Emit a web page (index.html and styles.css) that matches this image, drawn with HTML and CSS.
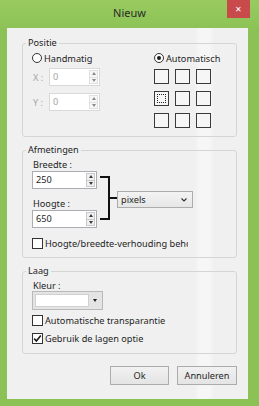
FILE: index.html
```html
<!DOCTYPE html>
<html lang="nl">
<head>
        <meta charset="UTF-8" />
        <meta name="viewport" content="width=device-width, initial-scale=1" />
        <title>Nieuw</title>
        <link rel="stylesheet" href="styles.css">
</head>
<body>

<div class="window">
        <div class="titlebar">
                <span class="title">Nieuw</span>
                <button class="close">&#x2715;</button>
        </div>

        <div class="client">
                <fieldset class="group group-pos">
                        <legend>Positie</legend>
                        <div class="pos-cols">
                                <div class="pos-manual">
                                        <label class="opt"><span class="radio"></span>Handmatig</label>
                                        <div class="coord">
                                                <span class="coord-label">X :</span>
                                                <div class="spin spin-small disabled">
                                                        <span class="spin-value">0</span>
                                                        <span class="spin-btns"><i class="up"></i><i class="down"></i></span>
                                                </div>
                                        </div>
                                        <div class="coord">
                                                <span class="coord-label">Y :</span>
                                                <div class="spin spin-small disabled">
                                                        <span class="spin-value">0</span>
                                                        <span class="spin-btns"><i class="up"></i><i class="down"></i></span>
                                                </div>
                                        </div>
                                </div>
                                <div class="pos-auto">
                                        <label class="opt"><span class="radio checked"></span>Automatisch</label>
                                        <div class="anchor-grid">
                                                <span></span><span></span><span></span>
                                                <span class="focus"></span><span></span><span></span>
                                                <span></span><span></span><span></span>
                                        </div>
                                </div>
                        </div>
                </fieldset>

                <fieldset class="group group-dims">
                        <legend>Afmetingen</legend>
                        <div class="dims-row">
                                <div class="dims-col">
                                        <div class="field-label">Breedte :</div>
                                        <div class="spin">
                                                <span class="spin-value">250</span>
                                                <span class="spin-btns"><i class="up"></i><i class="down"></i></span>
                                        </div>
                                        <div class="field-label second">Hoogte :</div>
                                        <div class="spin">
                                                <span class="spin-value">650</span>
                                                <span class="spin-btns"><i class="up"></i><i class="down"></i></span>
                                        </div>
                                </div>
                                <div class="brace">
                                        <span class="brace-arm"></span>
                                        <span class="brace-tick"></span>
                                </div>
                                <div class="unit-select">
                                        <span>pixels</span>
                                        <svg width="6" height="4" viewBox="0 0 6 4"><path d="M0.5 0.5 L3 3 L5.5 0.5" fill="none" stroke="#333" stroke-width="1.1"/></svg>
                                </div>
                        </div>
                        <label class="check check-ratio">
                                <span class="box"></span>
                                <span class="check-text clip">Hoogte/breedte-verhouding behouden</span>
                        </label>
                </fieldset>

                <fieldset class="group group-layer">
                        <legend>Laag</legend>
                        <div class="field-label small">Kleur :</div>
                        <div class="color-combo">
                                <span class="color-swatch"></span>
                                <span class="combo-btn"><i></i></span>
                        </div>
                        <label class="check check-first">
                                <span class="box"></span>
                                <span class="check-text">Automatische transparantie</span>
                        </label>
                        <label class="check check-second">
                                <span class="box checked">
                                        <svg width="9" height="9" viewBox="0 0 9 9"><path d="M1.2 4.6 L3.4 7 L7.8 1.4" fill="none" stroke="#1a1a1a" stroke-width="1.6"/></svg>
                                </span>
                                <span class="check-text">Gebruik de lagen optie</span>
                        </label>
                </fieldset>

                <div class="actions">
                        <button class="btn">Ok</button>
                        <button class="btn btn-wide">Annuleren</button>
                </div>
        </div>
</div>

</body>
</html>
```

FILE: styles.css
```css
* {
        box-sizing: border-box;
}

body {
        margin: 0;
        font-family: "Noto Sans", "Open Sans", sans-serif;
        font-size: 9.2px;
        color: #1e1e1e;
        background: #8cc255;
}

.window {
        width: 259px;
        height: 406px;
        background: #8cc255;
        display: flex;
        flex-direction: column;
}

.titlebar {
        height: 28px;
        display: flex;
        align-items: flex-start;
        padding-left: 32px;
        background: linear-gradient(#98ca60, #8dc356);
}

.title {
        flex: 1;
        text-align: center;
        font-size: 11px;
        line-height: 26px;
        color: #2a2a2a;
}

.close {
        width: 23px;
        height: 18px;
        margin-right: 9px;
        padding: 0;
        border: 0;
        background: #c94a4b;
        color: #fff;
        font-family: inherit;
        font-size: 8px;
        line-height: 18px;
}

.client {
        margin: 0 11px 0 7px;
        height: 371px;
        padding: 9px 11px 0 15px;
        background: linear-gradient(to right, #f0f0f0 0, #f0f0f0 188px, #f6f6f6 192px, #f6f6f6 203px, #f0f0f0 207px);
}

/* group boxes */

.group {
        margin: 0;
        padding: 3px 0 8px 9px;
        border: 1px solid #d5d5d5;
        border-radius: 3px;
        min-width: 0;
}

.group + .group {
        margin-top: 7px;
}

.group legend {
        padding: 0 2px;
        margin-left: -6px;
        line-height: 12px;
}

.group-layer {
        padding-bottom: 9px;
}

/* positie */

.pos-cols {
        display: flex;
}

.pos-manual {
        width: 122px;
}

.opt {
        display: flex;
        align-items: center;
        gap: 2px;
        height: 12px;
}

.radio {
        width: 10px;
        height: 10px;
        border: 1px solid #333;
        border-radius: 50%;
        background: #fff;
        display: flex;
        align-items: center;
        justify-content: center;
}

.radio.checked::before {
        content: "";
        width: 4px;
        height: 4px;
        border-radius: 50%;
        background: #1a1a1a;
}

.coord {
        display: flex;
        align-items: center;
        margin-top: 4px;
}

.coord + .coord {
        margin-top: 7px;
}

.coord-label {
        width: 17px;
        padding-left: 1px;
        color: #a6a6a6;
}

.anchor-grid {
        display: grid;
        grid-template-columns: repeat(3, 15px);
        column-gap: 6px;
        row-gap: 7px;
        margin-top: 5px;
}

.anchor-grid span {
        height: 15px;
        border: 1px solid #3a3a3a;
        background: #f6f6f6;
}

.anchor-grid .focus {
        outline: 1px dotted #222;
        outline-offset: -4px;
}

/* spin boxes */

.spin {
        width: 65px;
        height: 18px;
        display: flex;
        border: 1px solid #abadb3;
        background: #fff;
}

.spin-small {
        width: 51px;
}

.spin-value {
        flex: 1;
        padding-left: 3px;
        line-height: 16px;
}

.spin-btns {
        width: 10px;
        display: flex;
        flex-direction: column;
        padding: 1px 1px 1px 0;
}

.spin-btns i {
        flex: 1;
        display: flex;
        align-items: center;
        justify-content: center;
        border: 1px solid #c9c9c9;
        background: #f0f0f0;
}

.spin-btns i + i {
        border-top: 0;
}

.spin-btns i::before {
        content: "";
        border-left: 2px solid transparent;
        border-right: 2px solid transparent;
}

.spin-btns .up::before {
        border-bottom: 3px solid #3a3a3a;
}

.spin-btns .down::before {
        border-top: 3px solid #3a3a3a;
}

.spin.disabled {
        border-color: #d9d9d9;
        color: #a6a6a6;
}

.spin.disabled .spin-btns i {
        border-color: #e0e0e0;
        background: #f7f7f7;
}

.spin.disabled .up::before {
        border-bottom-color: #8a8a8a;
}

.spin.disabled .down::before {
        border-top-color: #8a8a8a;
}

/* afmetingen */

.field-label {
        line-height: 12px;
        padding-left: 1px;
}

.field-label.second {
        margin-top: 9px;
}

.field-label.small {
        line-height: 11px;
}

.dims-row {
        display: flex;
        align-items: flex-start;
}

.dims-col {
        width: 65px;
}

.brace {
        display: flex;
        align-items: center;
        height: 44px;
        margin: 17px 0 0 3px;
}

.brace-arm {
        width: 10px;
        height: 44px;
        border: 2px solid #111;
        border-left: 0;
}

.brace-tick {
        width: 7px;
        height: 2px;
        background: #111;
}

.unit-select {
        width: 76px;
        height: 17px;
        margin-top: 32px;
        padding: 0 5px 0 3px;
        display: flex;
        align-items: center;
        justify-content: space-between;
        border: 1px solid #acacac;
        background: linear-gradient(#f3f3f3, #e6e6e6);
}

/* checkboxes */

.check {
        display: flex;
        align-items: center;
        gap: 2px;
        height: 12px;
        white-space: nowrap;
}

.check-ratio {
        margin-top: 9px;
}

.check-first {
        margin-top: 4px;
}

.check-second {
        margin-top: 6px;
}

.box {
        width: 11px;
        height: 11px;
        flex: none;
        border: 1px solid #333;
        background: #fff;
        display: flex;
        align-items: center;
        justify-content: center;
}

.clip {
        width: 143px;
        overflow: hidden;
}

/* laag */

.color-combo {
        width: 71px;
        height: 19px;
        display: flex;
        padding: 2px;
        border: 1px solid #b9b9b9;
        background: #e4e4e4;
}

.color-swatch {
        flex: 1;
        background: #fff;
        border: 1px solid #d0d0d0;
}

.combo-btn {
        width: 10px;
        margin-left: 1px;
        display: flex;
        align-items: center;
        justify-content: center;
}

.combo-btn i {
        border-left: 2px solid transparent;
        border-right: 2px solid transparent;
        border-top: 3px solid #222;
}

/* buttons */

.actions {
        display: flex;
        justify-content: flex-end;
        gap: 8px;
        margin-top: 12px;
}

.btn {
        width: 59px;
        height: 19px;
        padding: 0;
        border: 1px solid #acacac;
        background: linear-gradient(#f1f1f1, #e4e4e4);
        color: #1e1e1e;
        font-family: inherit;
        font-size: inherit;
}

.btn-wide {
        width: 60px;
}
```
